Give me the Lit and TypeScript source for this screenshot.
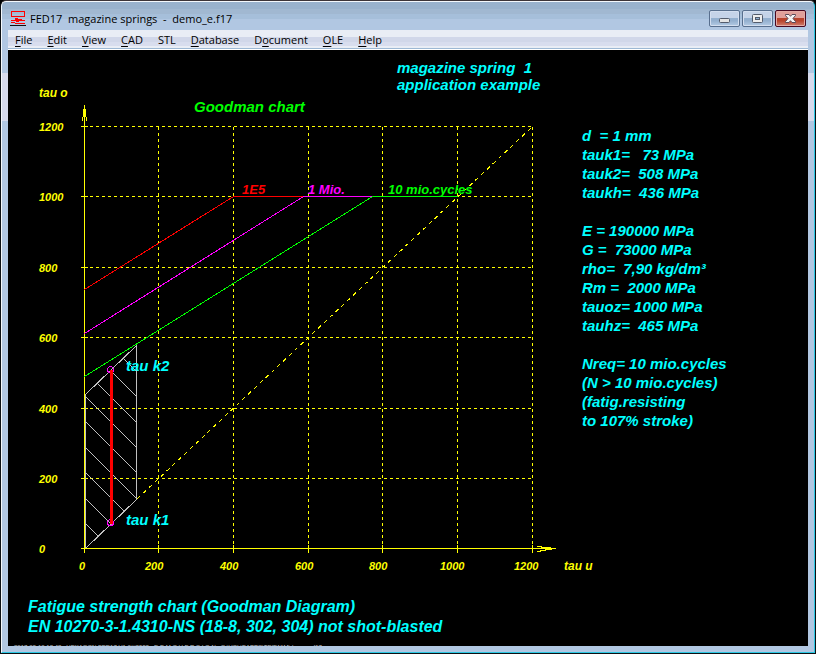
import { LitElement, html, svg, css } from "lit";
import { customElement } from "lit/decorators.js";

type Point = [number, number];

/* Goodman chart: tick positions inside the drawing, one per 200 MPa */
const TICKS_X = [76, 150, 225, 300, 374, 449, 524];
const TICKS_Y = [498, 428, 358, 287, 217, 146, 76];
const LABELS_X = [71, 137, 212, 287, 361, 432, 506];
const LIMITS: { label: string; cls: string; at: Point; points: Point[] }[] = [
  { label: "1E5", cls: "red", at: [234, 144], points: [[76, 239], [225, 146], [295, 146]] },
  { label: "1 Mio.", cls: "magenta", at: [300, 144], points: [[76, 283], [295, 146], [364, 146]] },
  { label: "10 mio.cycles", cls: "green", at: [380, 144], points: [[76, 326], [364, 146], [449, 146]] },
];
const HATCH = [-3, -2, -1, 0, 1, 2, 3, 4, 5].map((k) => Math.round(346 + k * 25.4));

@customElement("goodman-chart")
export class GoodmanChart extends LitElement {
  static styles = css`
    :host { display: block; }
    svg { display: block; width: 100%; height: auto; overflow: visible; }
    text { font-family: "Liberation Sans", Arial, sans-serif; font-weight: bold; font-style: italic; white-space: pre; }
    .lines { fill: none; stroke-width: 1; shape-rendering: crispEdges; }
    .axis { stroke: #ffff00; }
    .grid { stroke: #ffff00; stroke-dasharray: 3 3; }
    .diagonal { stroke: #ffff00; stroke-dasharray: 4 4; }
    .head { fill: #ffff00; shape-rendering: crispEdges; }
    .hatch { stroke: #c0c0c0; }
    .stroke { stroke: #ff0000; stroke-width: 3; }
    .point { stroke: #ff00ff; }
    .line.red { stroke: #ff0000; }
    .line.magenta { stroke: #ff00ff; }
    .line.green { stroke: #00ff00; }
    .tick { fill: #ffff00; font-size: 11px; }
    .name { fill: #ffff00; font-size: 12px; }
    .limit { font-size: 13px; }
    .limit.red { fill: #ff0000; }
    .limit.magenta { fill: #ff00ff; }
    .limit.green, .title { fill: #00ff00; }
    .title, .note { font-size: 15px; }
    .note { fill: #00ffff; }
  `;

  render() {
    return html`
      <svg viewBox="0 0 574 540" role="img" aria-label="Goodman chart">
        <defs>
          <clipPath id="zone"><path d="M77 499 L129 450 V295 L77 344 Z" /></clipPath>
        </defs>
        <g class="lines" transform="translate(0.5 0.5)">
          ${TICKS_X.slice(1).map((x) => svg`
            <path class="grid" d="M${x} 76 V494" />
            <path class="axis" d="M${x} 494 V502" />`)}
          ${TICKS_Y.slice(1).map((y) => svg`
            <path class="grid" d="M81 ${y} H524" />
            <path class="axis" d="M72 ${y} H79" />`)}
          <path class="diagonal" d="M129 448 L524 76" />
          <path class="hatch" d="M77 498 L128 449 V295 L77 344 Z" />
          <g clip-path="url(#zone)">
            ${HATCH.map((y) => svg`<path class="hatch" d="M77 ${y} L129 ${y + 52}" />`)}
          </g>
          <path class="axis" d="M76 54 V502 M72 498 H547" />
          <path class="axis" d="M528 496 H533 M532 497 H542 M528 501 H532 M531 500 H537 M536 499 H543" />
          ${LIMITS.map((l) => svg`
            <path class="line ${l.cls}" d="M${l.points.map((p) => p.join(" ")).join(" L")}" />`)}
          <circle class="point" cx="102" cy="319" r="3" />
          <circle class="point" cx="102" cy="472" r="3" />
          <path class="stroke" d="M103 319 V473" />
        </g>
        <path class="head" d="M75 59H78V67H75Z M74 67H75V71H74Z M78 67H79V71H78Z" />
        <text class="name" x="31" y="47">tau o</text>
        <text class="name" x="556" y="520">tau u</text>
        ${TICKS_Y.map((y, i) => svg`<text class="tick" x="31" y=${y + 5}>${i * 200}</text>`)}
        ${LABELS_X.map((x, i) => svg`<text class="tick" x=${x} y="520">${i * 200}</text>`)}
        ${LIMITS.map((l) => svg`
          <text class="limit ${l.cls}" x=${l.at[0]} y=${l.at[1]}>${l.label}</text>`)}
        <text class="title" x="186" y="62">Goodman chart</text>
        <text class="note" x="389" y="23">magazine spring  1</text>
        <text class="note" x="389" y="40">application example</text>
        <text class="note" x="118" y="321">tau k2</text>
        <text class="note" x="118" y="475">tau k1</text>
      </svg>
    `;
  }
}

const MENUS: [string, string, string][] = [
  ["", "F", "ile"],
  ["", "E", "dit"],
  ["", "V", "iew"],
  ["", "C", "AD"],
  ["STL", "", ""],
  ["", "D", "atabase"],
  ["D", "o", "cument"],
  ["", "O", "LE"],
  ["", "H", "elp"],
];

const RESULTS = [
  ["d  = 1 mm", "tauk1=   73 MPa", "tauk2=  508 MPa", "taukh=  436 MPa"],
  ["E = 190000 MPa", "G =  73000 MPa", "rho=  7,90 kg/dm³", "Rm =  2000 MPa", "tauoz= 1000 MPa", "tauhz=  465 MPa"],
  ["Nreq= 10 mio.cycles", "(N > 10 mio.cycles)", "(fatig.resisting", "to 107% stroke)"],
];

@customElement("app-root")
export class AppRoot extends LitElement {
  static styles = css`
    :host { display: block; height: 100vh; background: #000; }
    * { box-sizing: border-box; }
    .window {
      display: flex;
      flex-direction: column;
      height: 100%;
      border: 1px solid #0c1014;
      border-top-color: #3c3438;
      border-radius: 6px 6px 0 0;
      font: 11px/16px "Open Sans", "Noto Sans", sans-serif;
      color: #000;
    }
    .frame {
      flex: 1;
      min-height: 0;
      display: flex;
      flex-direction: column;
      padding: 0 6px 6px;
      border: 1px solid #f4f8fc;
      border-right-color: #2cc8e4;
      border-bottom-color: #2cc8e4;
      border-radius: 5px 5px 0 0;
      background: linear-gradient(#99b2cd 0 7px, #a1b8d1 7px 12px, #a6bfda 12px 17px, #b1c7e2 17px 71px, #d6daec 71px 119px, #b1c7e2 119px);
    }
    .titlebar { flex: none; display: flex; align-items: center; height: 28px; padding: 4px 2px 0; }
    .logo { width: 16px; height: 16px; margin-right: 4px; }
    .caption { flex: 1; margin: 0; padding-top: 2px; font-size: 11px; font-weight: normal; white-space: pre; }
    .controls { display: flex; gap: 2px; }
    .control {
      width: 31px;
      height: 17px;
      padding: 0;
      border: 1px solid #586f8e;
      border-radius: 2px;
      background: linear-gradient(#c5d3e8 0 50%, #94b0cf 50% 65%, #b4cbe4);
      box-shadow: inset 0 0 0 1px #d3deef;
    }
    .control.close {
      border-color: #480820;
      background: linear-gradient(#e0a09a 0 50%, #b8432c 50% 65%, #d08070);
      box-shadow: inset 0 0 0 1px #e3aaa4;
    }
    .control svg { display: block; width: 13px; height: 11px; margin: 0 auto; }
    .menubar {
      flex: none;
      display: flex;
      gap: 1px;
      height: 20px;
      border-bottom: 1px solid #fff;
      background: linear-gradient(#e9edf5 0 7px, #d1d7e9 7px 12px, #d8ddee 12px 16px, #e9edf5 16px 18px, #9db8d4 18px);
    }
    .menu { padding: 1px 7px; border: 0; background: none; color: inherit; font: inherit; line-height: 16px; }
    .menu u { text-underline-offset: 2px; }
    .canvas {
      flex: 1;
      min-height: 0;
      overflow: hidden;
      background: #000;
      color: #00ffff;
      font-family: "Liberation Sans", Arial, sans-serif;
      font-weight: bold;
      font-style: italic;
    }
    .board { display: grid; grid-template-columns: minmax(0, 1fr) 226px; }
    .results { display: grid; align-content: start; gap: 19px; padding-top: 76px; font-size: 15px; line-height: 19px; }
    .group { margin: 0; white-space: pre; }
    .summary { margin: 7px 20px 0; font-size: 16px; line-height: 20px; }
    .stamp { margin: 6px 6px 0; color: #c0c0c0; font-size: 6px; line-height: 8px; font-style: normal; font-weight: normal; white-space: pre; }
  `;

  render() {
    return html`
      <div class="window">
        <div class="frame">
          <header class="titlebar">
            <svg class="logo" viewBox="0 0 16 16" shape-rendering="crispEdges" aria-hidden="true">
              <path d="M1.5 1.5H14.5V6.5H1.5Z" fill="none" stroke="#f00" />
              <path d="M5 8H8V9H12V10H15V11H9V12H6V11H1V10H5Z M1 12H5V13H15V14H5V13H1Z" fill="#f00" />
              <path d="M0 15H16V16H0Z" fill="#111" />
            </svg>
            <h1 class="caption">FED17  magazine springs  -  demo_e.f17</h1>
            <div class="controls">
              <button class="control" aria-label="Minimize">
                <svg viewBox="0 0 13 11"><rect x="1.5" y="5.5" width="10" height="4" rx="1" fill="#e4e4e4" stroke="#545c6c" /></svg>
              </button>
              <button class="control" aria-label="Restore">
                <svg viewBox="0 0 13 11">
                  <rect x="1.5" y="1.5" width="10" height="8" rx="1" fill="#eeeeee" stroke="#545c6c" />
                  <rect x="4.5" y="4.5" width="4" height="2" fill="#8fb0d2" stroke="#545c6c" />
                </svg>
              </button>
              <button class="control close" aria-label="Close">
                <svg viewBox="0 0 13 11">
                  <path d="M1.5 1.5H5L6.5 3.3L8 1.5H11.5V2.5L9 5.5L11.5 8.5V9.5H8L6.5 7.7L5 9.5H1.5V8.5L4 5.5L1.5 2.5Z" fill="#f4f4f4" stroke="#5a4a58" />
                </svg>
              </button>
            </div>
          </header>
          <nav class="menubar">
            ${MENUS.map(([before, key, after]) => html`<button class="menu">${before}<u>${key}</u>${after}</button>`)}
          </nav>
          <main class="canvas">
            <div class="board">
              <goodman-chart></goodman-chart>
              <section class="results">
                ${RESULTS.map((lines) => html`<p class="group">${lines.join("\n")}</p>`)}
              </section>
            </div>
            <p class="summary">Fatigue strength chart (Goodman Diagram)<br />EN 10270-3-1.4310-NS (18-8, 302, 304) not shot-blasted</p>
            <p class="stamp">2017-09-10 18:48   HEXAGON FED17 V1.0/#9999   D E M O V E R S I O N   C:\\VOL\\BAPPS\\TBIDN\\M\\demo_e.f17</p>
          </main>
        </div>
      </div>
    `;
  }
}
